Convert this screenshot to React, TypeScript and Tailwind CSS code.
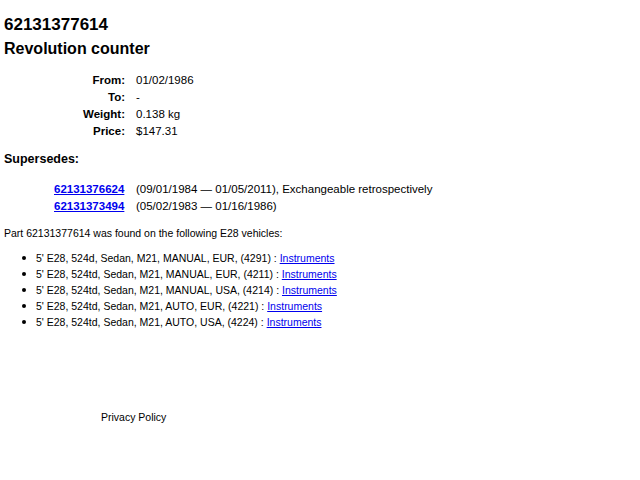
import React from "react";

type Row = { label: string; value: string };
type Sup = { part: string; text: string };

const specs: Row[] = [
  { label: "From:", value: "01/02/1986" },
  { label: "To:", value: "-" },
  { label: "Weight:", value: "0.138 kg" },
  { label: "Price:", value: "$147.31" },
];

const supersedes: Sup[] = [
  { part: "62131376624", text: "(09/01/1984 \u2014 01/05/2011), Exchangeable retrospectively" },
  { part: "62131373494", text: "(05/02/1983 \u2014 01/16/1986)" },
];

const vehicles = [
  "5' E28, 524d, Sedan, M21, MANUAL, EUR, (4291)",
  "5' E28, 524td, Sedan, M21, MANUAL, EUR, (4211)",
  "5' E28, 524td, Sedan, M21, MANUAL, USA, (4214)",
  "5' E28, 524td, Sedan, M21, AUTO, EUR, (4221)",
  "5' E28, 524td, Sedan, M21, AUTO, USA, (4224)",
];

export default function App() {
  return (
    <div className="min-h-[480px] bg-white pl-[4px] text-black font-['Liberation_Sans',Arial,sans-serif]">
      <h1 className="pt-[15px] text-[17px] font-bold leading-[20px]">62131377614</h1>
      <h2 className="mt-[4px] text-[16px] font-bold leading-[20px]">Revolution counter</h2>

      <div className="mt-[13px] grid grid-cols-[121px_auto] gap-x-[11px] text-[11.5px] leading-[17px]">
        {specs.map((r) => (
          <React.Fragment key={r.label}>
            <div className="text-right font-bold">{r.label}</div>
            <div>{r.value}</div>
          </React.Fragment>
        ))}
      </div>

      <h3 className="mt-[11px] text-[12.5px] font-bold leading-[16px]">Supersedes:</h3>

      <div className="mt-[14px] ml-[50px] grid grid-cols-[71px_auto] gap-x-[11px] text-[11.5px] leading-[17px]">
        {supersedes.map((s) => (
          <React.Fragment key={s.part}>
            <a href="#" className="font-bold text-[#0000ee] underline">
              {s.part}
            </a>
            <div>{s.text}</div>
          </React.Fragment>
        ))}
      </div>

      <p className="mt-[10px] text-[10.5px] leading-[16px]">
        Part 62131377614 was found on the following E28 vehicles:
      </p>

      <ul className="mt-[9px] text-[10.5px] leading-[16px]">
        {vehicles.map((v) => (
          <li key={v} className="flex items-center">
            <span className="ml-[18px] mr-[10px] h-[4px] w-[4px] rounded-full bg-black" />
            <span>
              {v} : <a href="#" className="text-[#0000ee] underline">Instruments</a>
            </span>
          </li>
        ))}
      </ul>

      <div className="mt-[79px] pl-[97px] text-[10.5px] leading-[16px]">Privacy Policy</div>
    </div>
  );
}
